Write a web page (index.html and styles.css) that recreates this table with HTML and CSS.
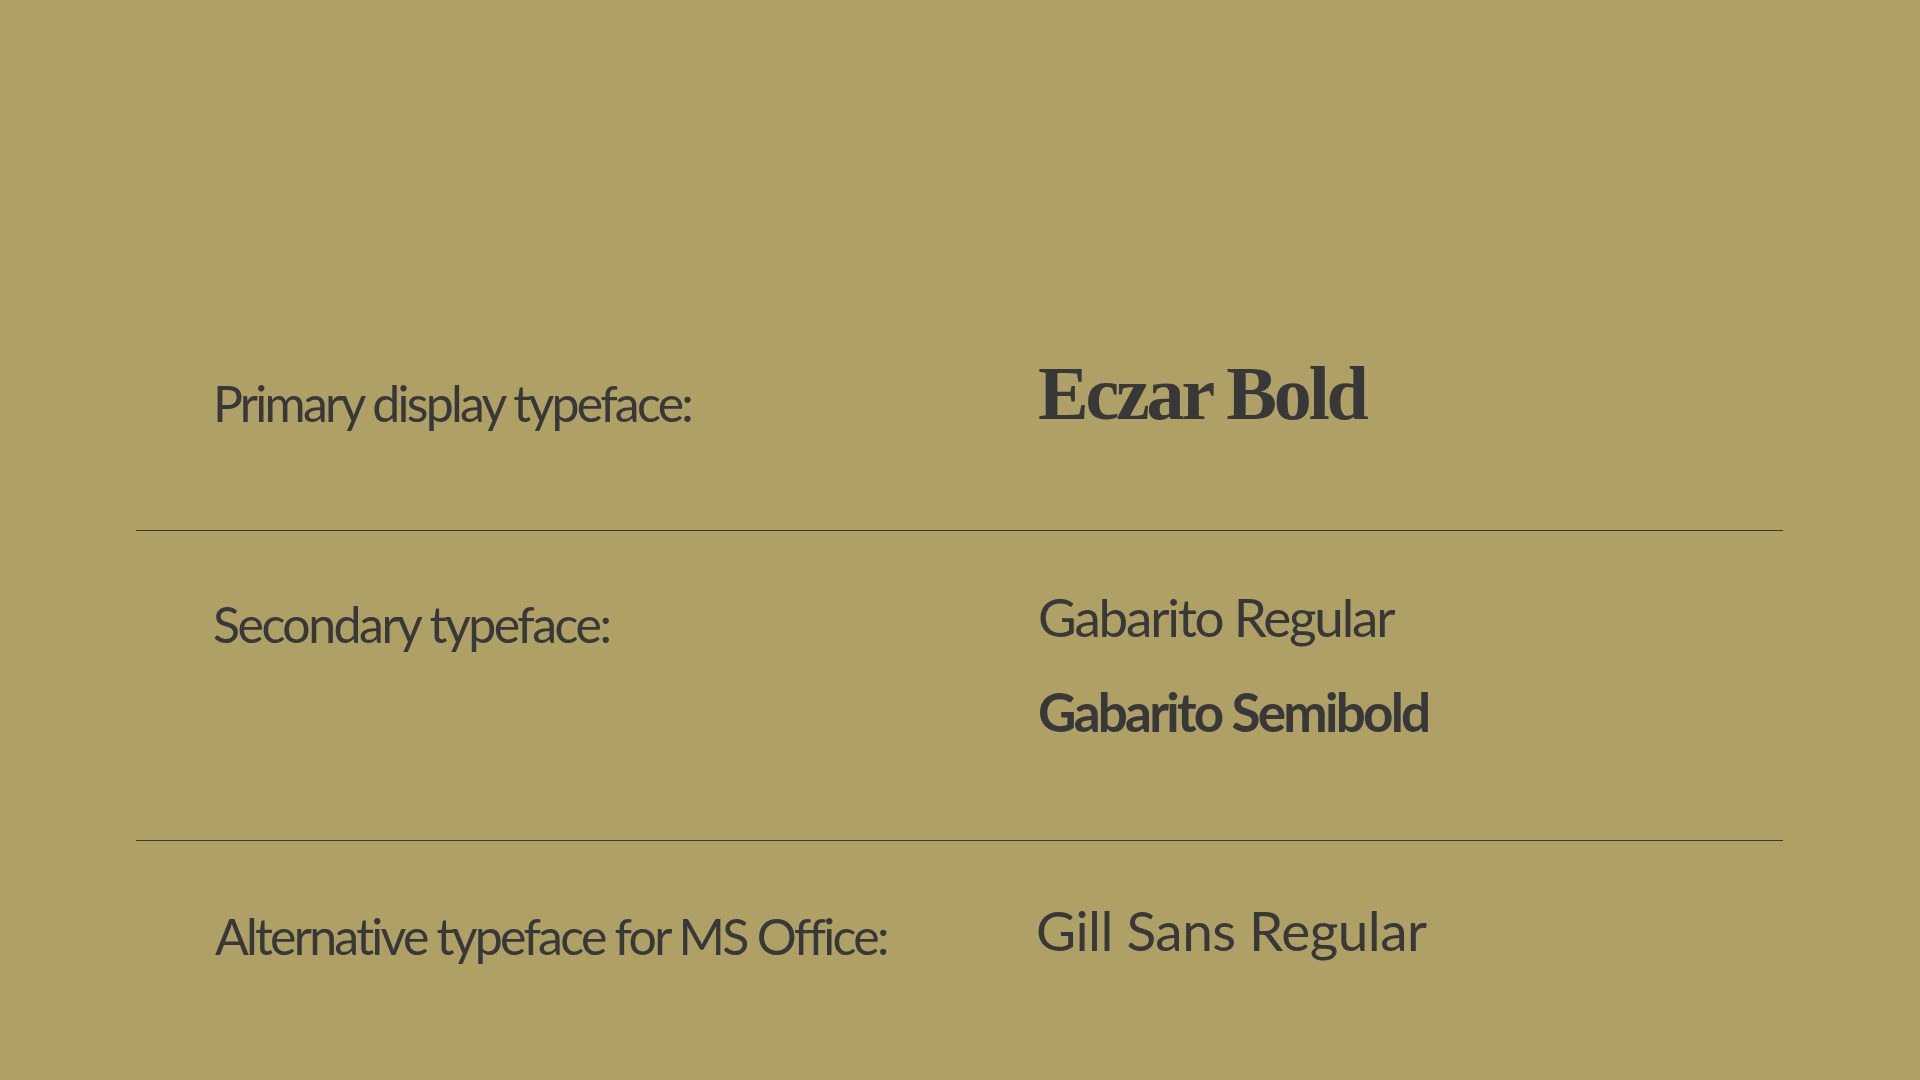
FILE: index.html
```html
<!DOCTYPE html>
<html lang="en">
<head>
<meta charset="utf-8">
<title>Typefaces</title>
<link rel="stylesheet" href="styles.css">
</head>
<body>
<main class="sheet">
  <section class="row row-primary">
    <div class="label label-primary">Primary display typeface:</div>
    <div class="values">
      <div class="value eczar">Eczar Bold</div>
    </div>
  </section>
  <section class="row row-secondary">
    <div class="label label-secondary">Secondary typeface:</div>
    <div class="values">
      <div class="value gab">Gabarito Regular</div>
      <div class="value gab semi">Gabarito Semibold</div>
    </div>
  </section>
  <section class="row row-alt">
    <div class="label label-alt">Alternative typeface for MS Office:</div>
    <div class="values">
      <div class="value gill">Gill Sans Regular</div>
    </div>
  </section>
</main>
</body>
</html>
```
FILE: styles.css
```css
html, body {
  margin: 0;
  padding: 0;
}
body {
  width: 1920px;
  height: 1080px;
  overflow: hidden;
  background: #afa066;
  color: #383838;
  font-family: "Lato", "Noto Sans", sans-serif;
}
.sheet {
  margin-left: 136px;
  width: 1647px;
}
.row {
  display: grid;
  grid-template-columns: 902px 1fr;
  align-items: start;
}
.row + .row {
  border-top: 1px solid #3c3a30;
}
.row-primary {
  height: 530px;
  box-sizing: border-box;
  padding-top: 362px;
}
.row-secondary {
  height: 310px;
  box-sizing: border-box;
  padding-top: 55px;
}
.row-alt {
  padding-top: 58px;
}
.label {
  padding-left: 77px;
  font-size: 50px;
  line-height: 62px;
  letter-spacing: -0.05em;
}
.label-primary {
  margin-top: 10px;
  letter-spacing: -0.055em;
}
.label-secondary {
  margin-top: 7px;
}
.label-alt {
  margin-top: 6px;
  padding-left: 79px;
  letter-spacing: -0.055em;
}
.values {
  display: flex;
  flex-direction: column;
}
.value {
  line-height: 62px;
}
.eczar {
  font-family: "Liberation Serif", "DejaVu Serif", serif;
  font-weight: 700;
  font-size: 76px;
  letter-spacing: -0.042em;
}
.gab {
  font-size: 53px;
  letter-spacing: -0.041em;
}
.gab + .gab {
  margin-top: 33px;
}
.semi {
  font-weight: 700;
  letter-spacing: -0.052em;
}
.gill {
  font-size: 55px;
  letter-spacing: -0.01em;
  margin-left: -2px;
}
```
